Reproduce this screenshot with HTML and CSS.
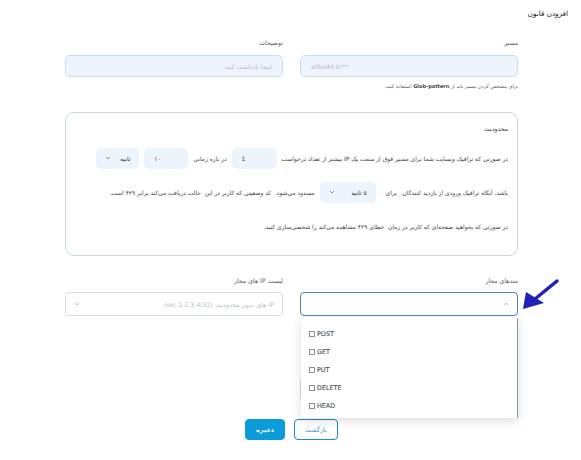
FILE: index.html
```html
<!DOCTYPE html>
<html lang="fa">
<head>
<meta charset="UTF-8">
<meta name="viewport" content="width=device-width, initial-scale=1.0">
<title>افزودن قانون</title>
<link rel="stylesheet" href="styles.css">
</head>
<body>
<div class="page">
  <h1 class="title">افزودن قانون</h1>
  <div class="form">
    <div class="cols">
      <div class="field">
        <label>مسیر</label>
        <input class="input ltr" placeholder="aliba44.ir/**">
        <p class="hint">برای مشخص کردن مسیر باید از <b>Glob-pattern</b> استفاده کنید.</p>
      </div>
      <div class="field">
        <label>توضیحات</label>
        <input class="input" placeholder="اینجا یادداشت کنید">
      </div>
    </div>

    <div class="card">
      <div class="card-title">محدودیت</div>
      <div class="line">
        <span>در صورتی که ترافیک وبسایت شما برای مسیر فوق از سمت یک IP بیشتر از تعداد درخواست</span>
        <span class="box num w45">1</span>
        <span>در بازه زمانی</span>
        <span class="box num w44">۱۰</span>
        <span class="box sel w43">ثانیه
          <svg width="6" height="4" viewBox="0 0 6 4"><path d="M1 1l2 2 2-2" fill="none" stroke="#3d7ebd" stroke-width="0.8"/></svg>
        </span>
      </div>
      <div class="line">
        <span>باشد، آنگاه ترافیک ورودی از بازدید کنندگان.&nbsp; برای</span>
        <span class="box sel w56 ml">۵ ثانیه
          <svg width="6" height="4" viewBox="0 0 6 4"><path d="M1 1l2 2 2-2" fill="none" stroke="#3d7ebd" stroke-width="0.8"/></svg>
        </span>
        <span>مسدود می‌شود.&nbsp; کد وضعیتی که کاربر در این&nbsp; حالت دریافت می‌کند برابر ۴۲۹ است.</span>
      </div>
      <div class="line">
        <span>در صورتی که بخواهید صفحه‌ای که کاربر در زمان&nbsp; خطای ۴۲۹ مشاهده می‌کند را شخصی‌سازی کنید.</span>
      </div>
    </div>

    <div class="cols second">
      <div class="field">
        <label>متدهای مجاز</label>
        <div class="select-wrap">
          <div class="select open">
            <svg width="6" height="4" viewBox="0 0 6 4"><path d="M1 3l2-2 2 2" fill="none" stroke="#9aa3ad" stroke-width="0.7"/></svg>
          </div>
          <ul class="menu">
            <li><i class="check"></i>POST</li>
            <li><i class="check"></i>GET</li>
            <li><i class="check"></i>PUT</li>
            <li><i class="check"></i>DELETE</li>
            <li><i class="check"></i>HEAD</li>
          </ul>
        </div>
        <p class="hint under">در صورت انتخاب نکردن، همه متدها مجاز هستند.</p>
        <label class="sub-label">صفحه خطای سفارشی</label>
        <div class="select"></div>
      </div>
      <div class="field">
        <label>لیست IP های مجاز</label>
        <div class="select">
          <span class="placeholder">IP های بدون محدودیت (ex: 1.2.3.4/32)</span>
          <svg width="6" height="4" viewBox="0 0 6 4"><path d="M1 1l2 2 2-2" fill="none" stroke="#9aa3ad" stroke-width="0.7"/></svg>
        </div>
      </div>
    </div>

    <div class="actions">
      <button class="btn back">بازگشت</button>
      <button class="btn save">ذخیره</button>
    </div>
  </div>

  <svg class="arrow" width="45" height="38" viewBox="0 0 45 38">
    <path d="M39 5L17 23" stroke="#2121b8" stroke-width="3.5" stroke-linecap="round"/>
    <path d="M5 33L8 16L26 27Z" fill="#2121b8"/>
  </svg>
</div>
</body>
</html>
```

FILE: styles.css
```css
body {
  margin: 0;
  font-family: "DejaVu Sans", sans-serif;
  background: #fff;
  color: #4a4a4a;
}
.page {
  direction: rtl;
  position: relative;
  height: 460px;
  box-sizing: border-box;
  padding: 9px 13px 0;
  overflow: hidden;
}
.title {
  margin: 0;
  font-size: 7.2px;
  font-weight: normal;
  line-height: 10px;
  color: #222;
}
.form {
  margin: 19px 50px 0 52px;
}
.cols {
  display: flex;
  gap: 17px;
}
.cols.second {
  margin-top: 20px;
}
.field {
  flex: 1;
  min-width: 0;
}
label {
  display: block;
  font-size: 6.2px;
  line-height: 10px;
  color: #555;
  margin-bottom: 7px;
}
.cols.second label {
  margin-bottom: 6px;
}
.input {
  display: block;
  width: 100%;
  height: 22px;
  box-sizing: border-box;
  border: 1px solid #cadcf1;
  border-radius: 5px;
  background: #eef4fc;
  padding: 0 10px;
  font-family: inherit;
  font-size: 6.2px;
  outline: none;
}
.input::placeholder {
  color: #b4becb;
}
.input.ltr {
  direction: ltr;
}
.hint {
  margin: 4px 0 0;
  font-size: 5px;
  line-height: 10px;
  color: #555;
}
.hint b {
  font-weight: bold;
  color: #444;
}
.hint.under {
  margin-top: 5px;
}
.sub-label {
  margin-top: 30px;
}

/* limit card */
.card {
  margin-top: 21px;
  border: 1px solid #cad6e3;
  border-radius: 9px;
  padding: 11px 9px 18px;
}
.card-title {
  font-size: 6.2px;
  line-height: 10px;
  color: #333;
  margin-bottom: 13px;
}
.line {
  display: flex;
  align-items: center;
  height: 22px;
  gap: 5px;
  font-size: 5.95px;
  white-space: nowrap;
  color: #3e3e3e;
  margin-bottom: 12px;
}
.line:last-child {
  margin-bottom: 0;
}
.box {
  height: 21px;
  box-sizing: border-box;
  background: #eef4fc;
  border-radius: 5px;
  display: flex;
  align-items: center;
  padding: 0 9px;
  color: #333;
}
.box.num {
  direction: ltr;
  padding-left: 10px;
}
.box.sel {
  justify-content: space-between;
}
.w43 { width: 43px; }
.w44 { width: 44px; }
.w45 { width: 45px; }
.w56 { width: 56px; }
.ml { margin-right: 5px; }

/* selects */
.select-wrap {
  position: relative;
  z-index: 5;
}
.select {
  height: 24px;
  box-sizing: border-box;
  border: 1px solid #d4dde8;
  border-radius: 4px;
  background: #fff;
  display: flex;
  align-items: center;
  justify-content: space-between;
  padding: 0 8px;
}
.select.open {
  border-color: #4f7db4;
}
.placeholder {
  font-size: 6.3px;
  color: #b4bcc7;
}
.menu {
  position: absolute;
  top: calc(100% + 2px);
  right: 0;
  width: 217px;
  height: 100px;
  box-sizing: border-box;
  margin: 0;
  padding: 7px 0 0 8px;
  list-style: none;
  direction: ltr;
  background: #fff;
  border-right: 1px solid #8493a8;
  box-shadow: 0 3px 10px rgba(0, 0, 0, 0.13);
  overflow: hidden;
}
.menu li {
  height: 18px;
  display: flex;
  align-items: center;
  gap: 2px;
  font-size: 6.4px;
  color: #4f555c;
  -webkit-text-stroke: 0.15px #4f555c;
}
.check {
  width: 4px;
  height: 4px;
  border: 1px solid #909090;
}

/* buttons */
.actions {
  display: flex;
  justify-content: center;
  gap: 9px;
  margin-top: 18px;
}
.btn {
  height: 21px;
  border-radius: 4px;
  font-family: inherit;
  font-size: 6.3px;
  padding: 0;
  cursor: pointer;
}
.btn.back {
  width: 44px;
  background: #fff;
  border: 1px solid #1f8dbf;
  color: #3b8fc0;
}
.btn.save {
  width: 40px;
  background: #0b9bd8;
  border: 1px solid #0b9bd8;
  color: #fff;
  font-weight: bold;
}

.arrow {
  position: absolute;
  left: 518px;
  top: 276px;
}
```
